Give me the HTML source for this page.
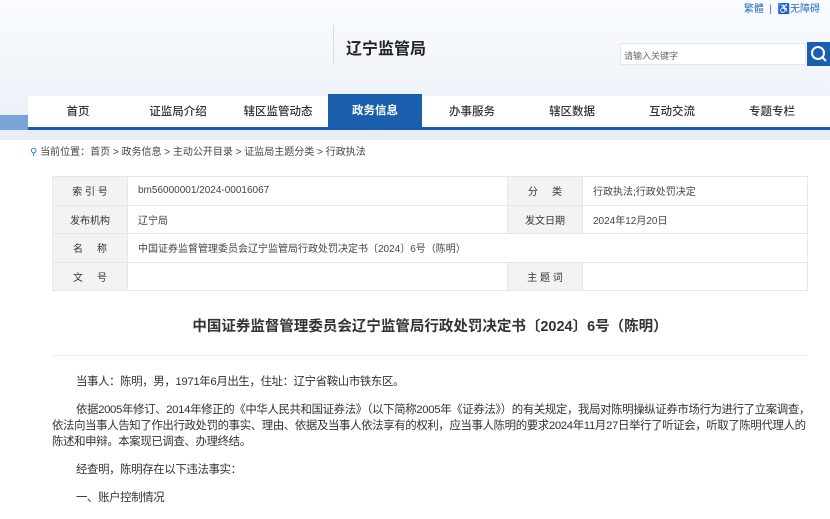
<!DOCTYPE html>
<html><head><meta charset="utf-8"><style>
*{margin:0;padding:0;box-sizing:border-box}
body{width:830px;height:519px;overflow:hidden;background:#fff;font-family:"Liberation Sans","Noto Sans CJK SC",sans-serif;color:#333;position:relative}
.hdr{position:absolute;left:0;top:0;width:830px;height:140px;background:linear-gradient(180deg,#fafcfe 0%,#eef3f9 70%,#e6edf6 100%)}
.top{position:absolute;right:10px;top:0;font-size:10px;color:#2a6fc0}
.vline{position:absolute;left:333px;top:25px;width:1px;height:40px;background:#d8dde4}
.logo{position:absolute;left:346px;top:35px;font-size:16px;font-weight:bold;color:#222}
.search{position:absolute;left:620px;top:43px;width:186px;height:22px;background:#fff;border:1px solid #e3e7ec;font-size:9px;color:#666;padding:5px 3px}
.sbtn{position:absolute;left:807px;top:42px;width:23px;height:24px;background:#1a5fad}
.strip{position:absolute;left:0;top:115px;width:30px;height:15px;background:#7aa4d6}
.nav{position:absolute;left:28px;top:96px;width:802px;height:34px;background:#fff;border-bottom:3px solid #1a5fad;display:flex}
.nav div{width:100px;text-align:center;font-size:11.5px;font-weight:500;color:#333;line-height:32px}
.nav .on{background:#1a5fad;color:#fff;margin-top:-2px;line-height:34px;height:34px;width:94px;font-weight:bold}
.crumb{position:absolute;left:30px;top:143px;font-size:10px;color:#444}
.crumb b{color:#2a7bd0;font-weight:normal}
table{position:absolute;left:52px;top:176px;width:756px;border-collapse:collapse;font-size:10px}
td{border:1px solid #e6e6e6;height:28.5px;padding:0 10px;color:#444;vertical-align:middle}
td.l{background:#f3f3f3;text-align:center;width:75px;color:#333}
.title{position:absolute;left:0;width:860px;top:315px;text-align:center;font-size:14.5px;font-weight:bold;color:#333}
.sep{position:absolute;left:52px;top:355px;width:756px;height:1px;background:#eee}
.body{position:absolute;left:52px;top:374px;width:760px;font-size:11.4px;line-height:16px;color:#333;letter-spacing:-0.35px}
.body p{text-indent:24px;margin-bottom:12px}
</style></head><body>
<div class="hdr"></div>
<div class="top">繁體 &nbsp;|&nbsp; <span>♿</span>无障碍</div>
<div class="vline"></div>
<div class="logo">辽宁监管局</div>
<div class="search">请输入关键字</div>
<div class="sbtn"><svg width="23" height="24"><circle cx="11" cy="11" r="6" fill="none" stroke="#fff" stroke-width="2"/><line x1="15" y1="15" x2="19" y2="19" stroke="#fff" stroke-width="2"/></svg></div>
<div class="strip"></div>
<div class="nav"><div>首页</div><div>证监局介绍</div><div>辖区监管动态</div><div class="on">政务信息</div><div>办事服务</div><div>辖区数据</div><div>互动交流</div><div>专题专栏</div></div>
<div class="crumb"><b>⚲</b> 当前位置：首页 &gt; 政务信息 &gt; 主动公开目录 &gt; 证监局主题分类 &gt; 行政执法</div>
<table>
<tr><td class="l">索 引 号</td><td style="width:380px">bm56000001/2024-00016067</td><td class="l" style="width:74px">分 &nbsp; &nbsp; 类</td><td>行政执法;行政处罚决定</td></tr>
<tr><td class="l">发布机构</td><td>辽宁局</td><td class="l">发文日期</td><td>2024年12月20日</td></tr>
<tr><td class="l">名 &nbsp; &nbsp; 称</td><td colspan="3">中国证券监督管理委员会辽宁监管局行政处罚决定书〔2024〕6号（陈明）</td></tr>
<tr><td class="l">文 &nbsp; &nbsp; 号</td><td></td><td class="l">主 题 词</td><td></td></tr>
</table>
<div class="title">中国证券监督管理委员会辽宁监管局行政处罚决定书〔2024〕6号（陈明）</div>
<div class="sep"></div>
<div class="body">
<p>当事人：陈明，男，1971年6月出生，住址：辽宁省鞍山市铁东区。</p>
<p>依据2005年修订、2014年修正的《中华人民共和国证券法》（以下简称2005年《证券法》）的有关规定，我局对陈明操纵证券市场行为进行了立案调查，依法向当事人告知了作出行政处罚的事实、理由、依据及当事人依法享有的权利，应当事人陈明的要求2024年11月27日举行了听证会，听取了陈明代理人的陈述和申辩。本案现已调查、办理终结。</p>
<p>经查明，陈明存在以下违法事实：</p>
<p>一、账户控制情况</p>
</div>
</body></html>
